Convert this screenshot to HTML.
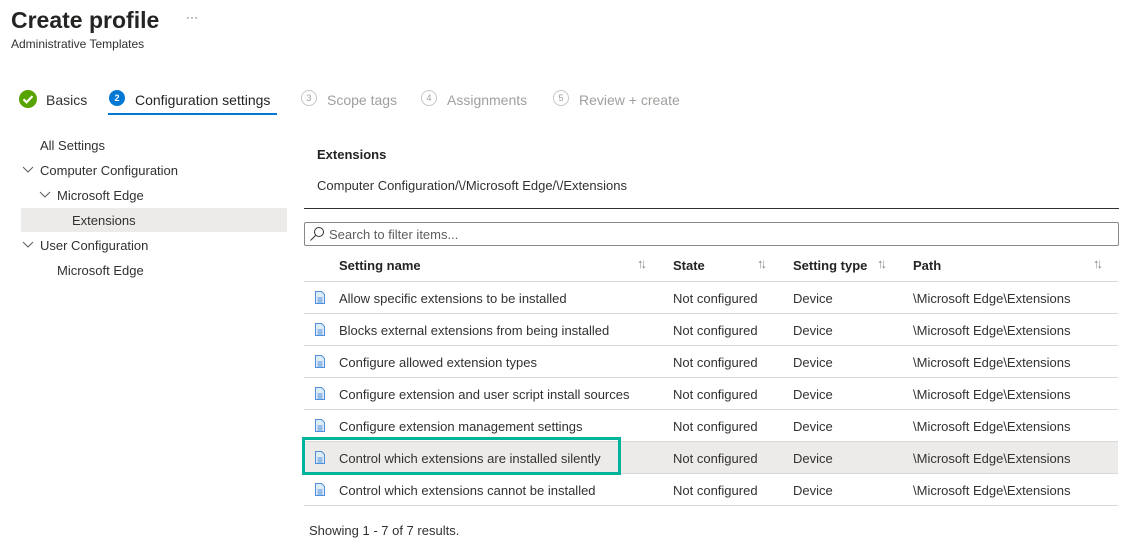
<!DOCTYPE html>
<html><head><meta charset="utf-8"><style>
*{margin:0;padding:0;box-sizing:border-box}
body{width:1132px;height:551px;background:#fff;font-family:"Liberation Sans",sans-serif;color:#323130;position:relative;overflow:hidden;font-size:13px}
.a{position:absolute;white-space:nowrap}
.t{line-height:16px}
.g{color:#a19f9d}
.circ{position:absolute;width:16px;height:16px;border-radius:50%;font-size:9px;text-align:center;line-height:14px}
.row{position:absolute;left:304px;width:814px;height:32px;border-bottom:1px solid #d8d8d8}
.row span{position:absolute;top:9px;line-height:16px}
.doc{position:absolute;left:11px;top:9px;width:10px;height:13px}
.arr{position:absolute;font-size:13px;color:#8a8886;top:256px;letter-spacing:-3px}
</style></head><body>
<div class="a" style="left:11px;top:5px;font-size:23px;font-weight:bold;color:#252423;line-height:30px">Create profile</div>
<div class="a" style="left:186px;top:10px;font-size:12px;color:#605e5c">···</div>
<div class="a" style="left:11px;top:37px;font-size:12px;line-height:14px">Administrative Templates</div>

<svg class="a" style="left:18px;top:89px" width="20" height="20"><circle cx="10" cy="10" r="9" fill="#57a300"/><path d="M5.5 10.3l3 3 6-6.2" stroke="#fff" stroke-width="2.2" fill="none"/></svg>
<div class="a t" style="left:46px;top:92px;font-size:14px">Basics</div>
<div class="circ" style="left:109px;top:90px;background:#0078d4;color:#fff;font-weight:bold;line-height:16px">2</div>
<div class="a t" style="left:135px;top:92px;font-size:14px;color:#252423">Configuration settings</div>
<div class="a" style="left:108px;top:113px;width:169px;height:2px;background:#0078d4"></div>
<div class="circ g" style="left:301px;top:90px;border:1px solid #c8c6c4">3</div>
<div class="a t g" style="left:327px;top:92px;font-size:14px">Scope tags</div>
<div class="circ g" style="left:421px;top:90px;border:1px solid #c8c6c4">4</div>
<div class="a t g" style="left:447px;top:92px;font-size:14px">Assignments</div>
<div class="circ g" style="left:553px;top:90px;border:1px solid #c8c6c4">5</div>
<div class="a t g" style="left:579px;top:92px;font-size:14px">Review + create</div>

<div class="a" style="left:21px;top:208px;width:266px;height:24px;background:#edebe9"></div>
<div class="a t" style="left:40px;top:138px">All Settings</div>
<svg class="a" style="left:22px;top:166px" width="12" height="8"><path d="M1 1l5 5 5-5" stroke="#605e5c" fill="none"/></svg>
<div class="a t" style="left:40px;top:163px">Computer Configuration</div>
<svg class="a" style="left:39px;top:191px" width="12" height="8"><path d="M1 1l5 5 5-5" stroke="#605e5c" fill="none"/></svg>
<div class="a t" style="left:57px;top:188px">Microsoft Edge</div>
<div class="a t" style="left:72px;top:213px">Extensions</div>
<svg class="a" style="left:22px;top:241px" width="12" height="8"><path d="M1 1l5 5 5-5" stroke="#605e5c" fill="none"/></svg>
<div class="a t" style="left:40px;top:238px">User Configuration</div>
<div class="a t" style="left:57px;top:263px">Microsoft Edge</div>

<div class="a t" style="left:317px;top:147px;font-weight:bold;color:#252423">Extensions</div>
<div class="a t" style="left:317px;top:178px">Computer Configuration/\/Microsoft Edge/\/Extensions</div>
<div class="a" style="left:304px;top:208px;width:815px;height:1px;background:#323130"></div>
<div class="a" style="left:304px;top:222px;width:815px;height:24px;border:1px solid #8a8886;border-radius:2px"></div>
<svg class="a" style="left:309px;top:226px" width="16" height="16"><circle cx="10" cy="6" r="4.5" stroke="#323130" fill="none"/><path d="M7 9l-5.5 5.5" stroke="#323130"/></svg>
<div class="a t" style="left:329px;top:227px;color:#605e5c">Search to filter items...</div>

<div class="row" style="top:250px;height:32px"></div>
<div class="a t" style="left:339px;top:258px;font-weight:bold;color:#252423">Setting name</div>
<div class="a t" style="left:673px;top:258px;font-weight:bold;color:#252423">State</div>
<div class="a t" style="left:793px;top:258px;font-weight:bold;color:#252423">Setting type</div>
<div class="a t" style="left:913px;top:258px;font-weight:bold;color:#252423">Path</div>
<div class="arr" style="left:637px">↑↓</div>
<div class="arr" style="left:757px">↑↓</div>
<div class="arr" style="left:877px">↑↓</div>
<div class="arr" style="left:1093px">↑↓</div>

<div class="row" style="top:282px"><svg class="doc"><path d="M.5.5h6l3 3v9h-9z" fill="#deecf9" stroke="#4f8fd6"/><path d="M2.5 7h5M2.5 9h5M2.5 11h5" stroke="#4f8fd6"/></svg><span style="left:35px">Allow specific extensions to be installed</span><span style="left:369px">Not configured</span><span style="left:489px">Device</span><span style="left:609px">\Microsoft Edge\Extensions</span></div>
<div class="row" style="top:314px"><svg class="doc"><path d="M.5.5h6l3 3v9h-9z" fill="#deecf9" stroke="#4f8fd6"/><path d="M2.5 7h5M2.5 9h5M2.5 11h5" stroke="#4f8fd6"/></svg><span style="left:35px">Blocks external extensions from being installed</span><span style="left:369px">Not configured</span><span style="left:489px">Device</span><span style="left:609px">\Microsoft Edge\Extensions</span></div>
<div class="row" style="top:346px"><svg class="doc"><path d="M.5.5h6l3 3v9h-9z" fill="#deecf9" stroke="#4f8fd6"/><path d="M2.5 7h5M2.5 9h5M2.5 11h5" stroke="#4f8fd6"/></svg><span style="left:35px">Configure allowed extension types</span><span style="left:369px">Not configured</span><span style="left:489px">Device</span><span style="left:609px">\Microsoft Edge\Extensions</span></div>
<div class="row" style="top:378px"><svg class="doc"><path d="M.5.5h6l3 3v9h-9z" fill="#deecf9" stroke="#4f8fd6"/><path d="M2.5 7h5M2.5 9h5M2.5 11h5" stroke="#4f8fd6"/></svg><span style="left:35px">Configure extension and user script install sources</span><span style="left:369px">Not configured</span><span style="left:489px">Device</span><span style="left:609px">\Microsoft Edge\Extensions</span></div>
<div class="row" style="top:410px"><svg class="doc"><path d="M.5.5h6l3 3v9h-9z" fill="#deecf9" stroke="#4f8fd6"/><path d="M2.5 7h5M2.5 9h5M2.5 11h5" stroke="#4f8fd6"/></svg><span style="left:35px">Configure extension management settings</span><span style="left:369px">Not configured</span><span style="left:489px">Device</span><span style="left:609px">\Microsoft Edge\Extensions</span></div>
<div class="row" style="top:442px;background:#edebe9"><svg class="doc"><path d="M.5.5h6l3 3v9h-9z" fill="#deecf9" stroke="#4f8fd6"/><path d="M2.5 7h5M2.5 9h5M2.5 11h5" stroke="#4f8fd6"/></svg><span style="left:35px">Control which extensions are installed silently</span><span style="left:369px">Not configured</span><span style="left:489px">Device</span><span style="left:609px">\Microsoft Edge\Extensions</span></div>
<div class="row" style="top:474px"><svg class="doc"><path d="M.5.5h6l3 3v9h-9z" fill="#deecf9" stroke="#4f8fd6"/><path d="M2.5 7h5M2.5 9h5M2.5 11h5" stroke="#4f8fd6"/></svg><span style="left:35px">Control which extensions cannot be installed</span><span style="left:369px">Not configured</span><span style="left:489px">Device</span><span style="left:609px">\Microsoft Edge\Extensions</span></div>
<div class="a" style="left:302px;top:437px;width:319px;height:38px;border:3px solid #00b49c"></div>

<div class="a t" style="left:309px;top:523px">Showing 1 - 7 of 7 results.</div>
</body></html>
